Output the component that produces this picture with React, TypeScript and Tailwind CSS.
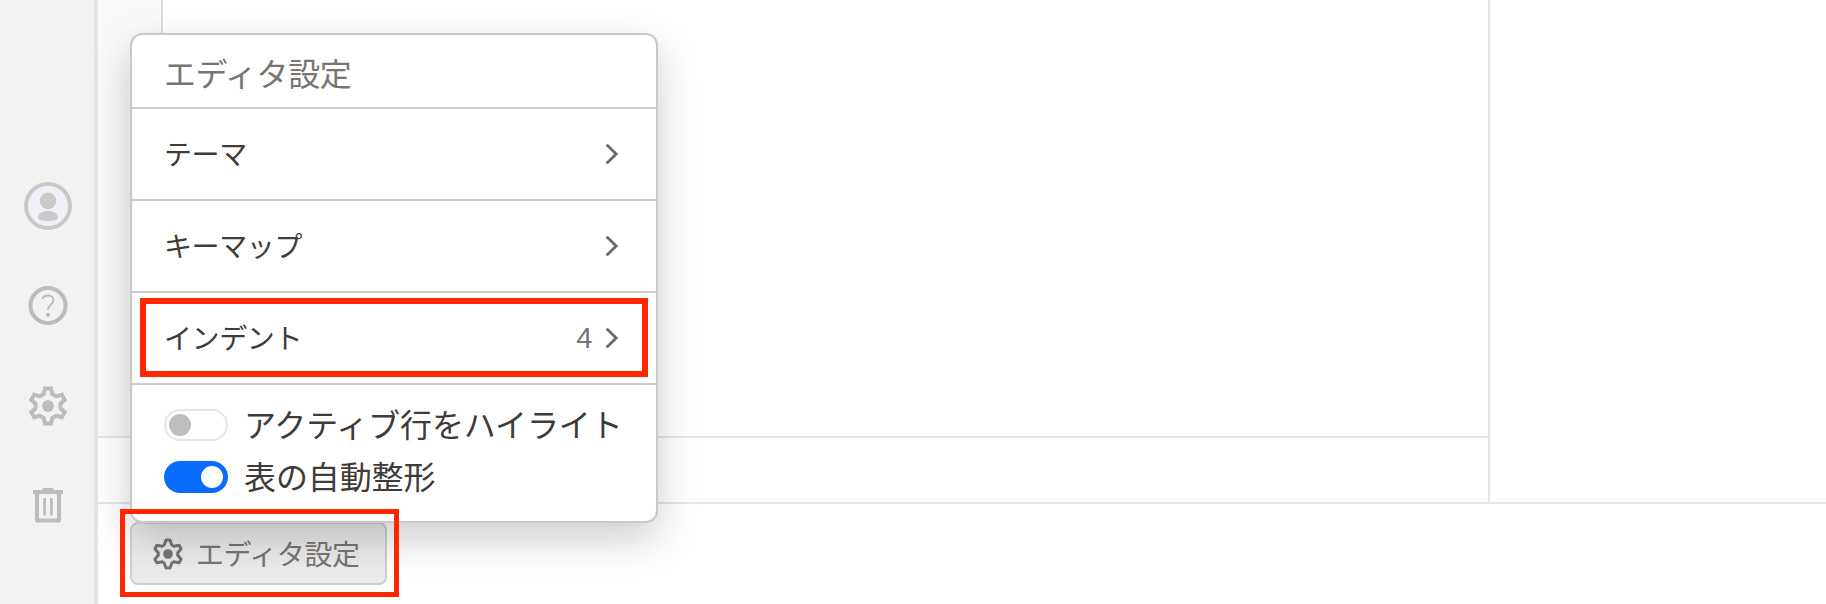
import React from "react";

function Gear({ className }: { className?: string }) {
  return (
    <svg viewBox="-20 -20 40 40" className={className} fill="none">
      <path
        d="M-4.3-12-3-17.5H3L4.3-12 8.2-9.7 13.7-11.4 16.7-6.200 12.500-2.300V2.300L16.700 6.200 13.700 11.400 8.200 9.700 4.300 12 3 17.500H-3L-4.300 12-8.200 9.700-13.700 11.400-16.700 6.200-12.500 2.300V-2.300L-16.700-6.200-13.700-11.400-8.200-9.700Z"
        stroke="currentColor"
        strokeWidth="4"
      />
      <circle r="5.900" fill="currentColor" />
    </svg>
  );
}

function SmallGear({ className }: { className?: string }) {
  return (
    <svg viewBox="-16 -16 32 32" className={className} fill="none">
      <path
        d="M-3.800-9-2-14H2L3.800-9 5.900-7.800 11.100-8.700 13.100-5.300 9.700-1.200V1.200L13.100 5.300 11.100 8.700 5.900 7.800 3.800 9 2 14H-2L-3.800 9-5.900 7.800-11.100 8.700-13.100 5.300-9.700 1.200V-1.200L-13.100-5.300-11.100-8.700-5.900-7.800Z"
        stroke="currentColor"
        strokeWidth="3"
        strokeLinejoin="round"
      />
      <circle r="4.800" fill="currentColor" />
    </svg>
  );
}

function Chevron() {
  return (
    <svg viewBox="0 0 13 20" className="h-5 w-[13px]" fill="none">
      <path d="M1.500 1.500 10.200 10 1.500 18.500" stroke="#6b6968" strokeWidth="2.800" strokeLinecap="round" />
    </svg>
  );
}

function Row({ label, value }: { label: string; value?: string }) {
  return (
    <button className="flex h-[92px] w-full items-center justify-between border-b-2 border-[#cdcdcd] pr-[37px] pl-8 text-[28px] tracking-[-0.4px] text-[#3e3b39]">
      <span className="pb-0.5">{label}</span>
      <span className="flex items-center gap-3.5 text-[#777573]">
        <span className="pt-px font-['Liberation_Sans',sans-serif] text-[29px]">{value}</span>
        <Chevron />
      </span>
    </button>
  );
}

function Toggle({ label, on }: { label: string; on?: boolean }) {
  return (
    <label className="flex h-[52px] items-center gap-4 text-[32px] text-[#3e3b39]">
      <span
        className={
          on
            ? "flex h-8 w-16 shrink-0 items-center justify-end rounded-full bg-[#0a6cff] px-[5px]"
            : "flex h-8 w-16 shrink-0 items-center rounded-full border-2 border-[#e6e6e6] bg-white px-[3px]"
        }
      >
        <span className={on ? "size-[22px] rounded-full bg-white" : "size-[22px] rounded-full bg-[#bdbdbd]"} />
      </span>
      <span className="pb-[5px] tracking-[-0.1px] whitespace-nowrap">{label}</span>
    </label>
  );
}

export default function App() {
  return (
    <div className="relative flex h-[604px] w-full overflow-hidden bg-white font-['Noto_Sans_CJK_JP',sans-serif] leading-none">
      <nav className="flex w-[98px] shrink-0 flex-col items-center border-r-4 border-[#e5e5e3] bg-[#f2f2f0] pt-[182px] pl-0.5 text-[#bcbcba]">
        <svg viewBox="0 0 48 48" className="size-12">
          <circle cx="24" cy="24" r="22" fill="#f0f1f6" stroke="#c8c8c6" strokeWidth="4" />
          <circle cx="24" cy="19" r="8.3" fill="#cacac8" />
          <path d="M14 35.5c0-4 4.5-6.5 10-6.5s10 2.500 10 6.500c0 2.500-4.500 3.500-10 3.500s-10-1-10-3.500z" fill="#cacac8" />
        </svg>
        <svg viewBox="0 0 40 40" className="mt-[56px] size-10" fill="none" stroke="currentColor">
          <circle cx="20" cy="19.500" r="17.500" strokeWidth="4" />
          <path d="M14.500 12.800C15.500 10.300 17.500 9.500 20 9.500c3 0 5.400 1.700 5.400 4.700 0 4.300-5.400 4.500-5.400 9.800" strokeWidth="1.900" />
          <circle cx="20" cy="29" r="2" fill="currentColor" stroke="none" />
        </svg>
        <Gear className="mt-[60px] size-10" />
        <svg viewBox="0 0 32 36" className="mt-[62px] h-9 w-8" fill="currentColor">
          <path d="M10.500 0h11v2H31v4H1V2h9.500z" />
          <path d="M5 5v27.500h22V5" fill="none" stroke="currentColor" strokeWidth="4" strokeLinejoin="round" />
          <path d="M11.200 10h2.800v17.500h-2.800zM18 10h2.800v17.500H18z" />
        </svg>
      </nav>
      <main className="flex min-w-0 flex-1 flex-col">
        <div className="flex h-[504px] border-b-2 border-[#e5e5e5]">
          <div className="flex w-[1392px] flex-col border-r-2 border-[#e5e5e5]">
            <div className="h-[438px] border-b-2 border-[#e5e5e5]">
              <div className="h-full w-[65px] border-r-2 border-[#dddddd] bg-[#f9f9f7]" />
            </div>
          </div>
        </div>
        <footer className="pt-[18px] pl-8">
          <button className="flex h-[63px] w-[257px] items-center rounded-lg border-2 border-[#cfcfcf] bg-[#ebebeb] pl-5 text-[28px] tracking-[-0.4px] text-[#777573]">
            <SmallGear className="mr-3 size-8" />
            <span className="pb-px">エディタ設定</span>
          </button>
        </footer>
      </main>

      <section className="absolute top-[33px] left-[130px] h-[490px] w-[528px] rounded-xl border-2 border-[#c8c8c8] bg-white shadow-[0_16px_40px_rgba(0,0,0,0.2)]">
        <h2 className="flex h-[74px] items-center border-b-2 border-[#cdcdcd] pt-0.5 pl-8 text-[32px] tracking-[-0.4px] text-[#777573]">
          エディタ設定
        </h2>
        <Row label="テーマ" />
        <Row label="キーマップ" />
        <Row label="インデント" value="4" />
        <div className="px-8 pt-[14px]">
          <Toggle label="アクティブ行をハイライト" />
          <Toggle label="表の自動整形" on />
        </div>
      </section>
      <div className="absolute top-[298px] left-[140px] h-[79px] w-[508px] border-6 border-[#ff2600]" />
      <div className="absolute top-[508.5px] left-[119.5px] h-[88px] w-[279px] border-5 border-[#ff2600]" />
    </div>
  );
}
